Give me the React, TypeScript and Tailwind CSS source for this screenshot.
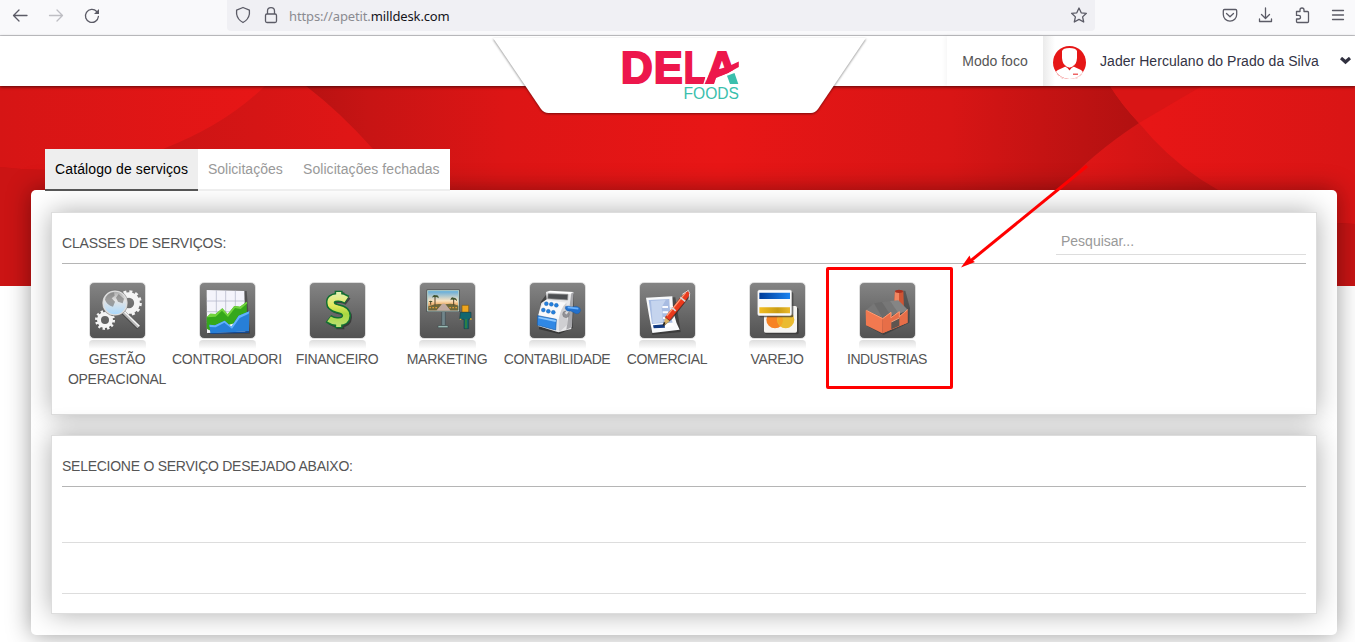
import React from "react";

const Gears = () => (
  <>
    <g fill="none" stroke="#f4f4f4">
      <circle cx="117" cy="60" r="24" strokeWidth="17" />
      <circle cx="117" cy="60" r="34" strokeWidth="9" strokeDasharray="9 8.8" />
      <circle cx="45" cy="111" r="18" strokeWidth="12" />
      <circle cx="45" cy="111" r="26" strokeWidth="8" strokeDasharray="7 6.6" />
    </g>
    <path d="M97 86 146 134" stroke="#444" strokeWidth="13" />
    <path d="M97 84 146 132" stroke="#b9b9b9" strokeWidth="10" />
    <path d="M100 83 148 130" stroke="#f5f5f5" strokeWidth="4" />
    <circle cx="75" cy="60" r="36" fill="url(#lens)" stroke="#dedede" strokeWidth="5" />
    <circle cx="75" cy="60" r="39" fill="none" stroke="#666" strokeWidth="1.5" />
    <path d="M45 50q5-20 27-22l2 10-9 8 10 10-6 15q-18-4-24-21M86 33l16 14-4 14-14-5-6-12z" fill="#777" opacity=".65" />
  </>
);

const Graph = () => (
  <>
    <path d="M24 24H140L150 152H24z" fill="#333" opacity=".55" />
    <path d="M20 21 133 24 136 147 21 150z" fill="#f4f4fb" />
    <path d="M20 54H134M20 86H134M20 118H134M49 22V149M77 22V149M106 23V148" stroke="#aeb0c4" strokeWidth="2" />
    <path d="M20 103 31 92 47 93 67 76 83 94 103 69 120 71 140 56 141 110 28 142 20 137z" fill="#35a81b" />
    <path d="M20 103 31 92 47 93 67 76 83 94 103 69 120 71 140 56 142 61 122 78 105 75 84 102 66 83 47 101z" fill="#72d43e" />
    <path d="M28 125 45 127 74 113 94 131 116 98 148 85 147 145 31 151z" fill="#277fd8" />
    <path d="M28 125 45 127 74 113 94 131 116 98 148 85 146 92 119 105 96 137 73 119 47 133 29 132z" fill="#62b1ff" />
    <path d="M31 151 147 145V149L31 153z" fill="#124b99" />
  </>
);

const Dollar = () => (
  <g fill="none" strokeLinejoin="round">
    <path d="M109 51Q96 41 81 43 60 45 62 60 62 72 83 77 109 82 109 98 108 117 84 116 68 117 56 107M86 23V38M86 118V134" stroke="#222" strokeWidth="24" opacity=".6" transform="translate(5 5)" />
    <path d="M86 23V38M86 118V136" stroke="#126f32" strokeWidth="24" />
    <path d="M111 50Q96 41 81 43 60 45 62 60 62 72 83 77 109 82 109 98 108 117 84 116 68 117 55 107" stroke="#126f32" strokeWidth="28" />
    <path d="M86 27V41M86 116V132" stroke="url(#money)" strokeWidth="15" />
    <path d="M109 50Q96 41 81 43 60 45 62 60 62 72 83 77 109 82 109 98 108 117 84 116 70 117 57 108" stroke="url(#money)" strokeWidth="19" />
  </g>
);

const Billboard = () => (
  <>
    <path d="M65 84H76V128H65z" fill="#71868b" stroke="#3f4c50" strokeWidth="2" />
    <path d="M54 128H84V134H54z" fill="#a5c7c0" stroke="#414f50" strokeWidth="2" />
    <rect x="20" y="20" width="99" height="67" fill="#343434" />
    <rect x="23" y="23" width="93" height="61" fill="url(#beach)" stroke="#b8d8d2" strokeWidth="3" />
    <path d="M25 70Q52 60 66 64L50 82H25zM75 64Q98 59 115 68V82H91z" fill="#6e683b" />
    <path d="M67 62H75L91 82H50z" fill="#c0a9a0" />
    <path d="M45 67V40M101 67V46M32 65V55" stroke="#54442a" strokeWidth="3" />
    <path d="M36 44q3-11 11-7 9-3 9 9-8-6-10-3-6-2-10 1M91 52q2-12 10-8 10 0 10 11-7-8-10-4-6-3-10 1M26 57q6-8 12 0" fill="#40522e" />
    <path d="M28 74h25M88 74h25" stroke="#df9c38" strokeWidth="4" strokeDasharray="5 4" />
    <path d="M126 67H146V88H126z" fill="#efa51e" stroke="#7b5b17" strokeWidth="2" />
    <path d="M121 88H153V108H146V137H132V109H119z" fill="#12676f" stroke="#174248" strokeWidth="2" />
    <path d="M138 109V136" stroke="#32853c" strokeWidth="5" />
    <path d="M119 109h5M150 108h5" stroke="#dfb02a" strokeWidth="4" />
  </>
);

const Register = () => (
  <>
    <path d="M32 57 52 30 132 34 128 135 88 153 27 139z" fill="#222" opacity=".6" />
    <path d="M48 27 126 28 124 138 85 148 24 129 25 95 34 60 50 49z" fill="#e7e7e9" />
    <path d="M48 27 60 23 131 27 126 34z" fill="#fff" />
    <path d="M124 31 131 27 126 132 109 140z" fill="#a7a7ab" />
    <path d="M54 32 114 34 113 51 53 47z" fill="#4d4f52" stroke="#999" strokeWidth="2" />
    <path d="M49 51Q34 62 26 96L86 110Q92 75 109 59z" fill="#f9f9fa" />
    <path d="M86 110Q92 75 109 59L112 125 87 148z" fill="#cfcfd2" />
    <path d="M23 98 79 109 77 141 22 126z" fill="#3088e5" stroke="#195da8" strokeWidth="2" />
    <path d="M26 101 78 111 77 117 25 106z" fill="#8bc7ff" />
    <g fill="#257fdd" stroke="#125aa4">
      <circle cx="49" cy="62" r="6" /><circle cx="64" cy="64" r="6" /><circle cx="79" cy="67" r="6" />
      <circle cx="40" cy="81" r="6" /><circle cx="55" cy="85" r="6" /><circle cx="70" cy="88" r="6" />
    </g>
    <circle cx="108" cy="94" r="10" fill="#919196" stroke="#666" />
    <path d="M107 92 119 77" stroke="#d8d8da" strokeWidth="7" />
    <path d="M106 71Q115 66 123 72L139 70Q152 73 152 82 149 94 138 92L122 84Q111 87 106 78z" fill="#2370cc" stroke="#14559c" />
    <path d="M113 73 145 77" stroke="#68b1ff" strokeWidth="5" />
  </>
);

const Document = () => (
  <>
    <path d="M22 47 106 43 122 147 37 155z" fill="#222" opacity=".5" />
    <path d="M18 44 97 40Q98 105 119 140L37 150Q27 101 18 44z" fill="#f8fafc" />
    <path d="M26 51 88 48Q89 94 98 119L36 123Q31 85 26 51z" fill="#a8bce2" />
    <path d="M33 54 77 51 65 73 69 118 38 121z" fill="#c5d4ee" />
    <path d="M67 72H84M68 88H84M69 105H84" stroke="#f8faff" strokeWidth="6" />
    <path d="M36 123 98 119 102 130 39 138z" fill="#fff" />
    <path d="M39 127 73 124 75 134 41 136z" fill="#123b83" />
    <path d="M72 130 78 101 124 43 140 23 149 27 149 41 97 108 80 122z" fill="#222" opacity=".7" />
    <path d="M70 128 76 102 89 115z" fill="#d9b166" />
    <path d="M76 103 123 42 136 55 89 112z" fill="#eb3a1c" stroke="#8e2518" strokeWidth="2" />
    <path d="M124 42 140 23 149 27 148 38 135 55z" fill="#e83b20" stroke="#711f18" />
    <path d="M80 99 137 29" stroke="#ff9a74" strokeWidth="4" />
    <path d="M91 76Q98 72 107 84M121 43 136 55" fill="none" stroke="#d8d8d8" strokeWidth="5" />
    <path d="M127 34 145 22 149 31 147 51" fill="none" stroke="#dedede" strokeWidth="3" />
    <path d="M70 128 74 118" stroke="#222" strokeWidth="5" />
  </>
);

const Cards = () => (
  <>
    <rect x="45" y="74" width="101" height="80" rx="5" fill="#333" opacity=".7" />
    <rect x="42" y="69" width="99" height="80" rx="5" fill="#f6f5f2" />
    <circle cx="75" cy="110" r="26" fill="#f78324" /><circle cx="107" cy="110" r="26" fill="#eabb31" />
    <path d="M91 90Q107 110 91 131 76 112 91 90" fill="#f5a626" />
    <rect x="28" y="27" width="102" height="76" rx="5" fill="#333" opacity=".7" />
    <rect x="23" y="21" width="102" height="77" rx="5" fill="#fafafa" stroke="#c7c7c7" />
    <path d="M28 29H120V48H28z" fill="url(#cardblue)" /><path d="M28 73H120V91H28z" fill="url(#cardgold)" />
  </>
);

const Factory = () => (
  <>
    <path d="M21 83 104 54 106 24 136 23 150 75 148 119 71 156 22 130z" fill="#242424" opacity=".4" />
    <path d="M105 24 130 23 132 79 101 77z" fill="#cf5534" />
    <path d="M105 24 117 23V75H102z" fill="#f28661" /><ellipse cx="117" cy="25" rx="12" ry="5" fill="#a93020" />
    <path d="M17 82 68 104 67 151 18 127z" fill="#f27950" />
    <path d="M67 105 91 88V108L115 85V105L142 80V119L67 151z" fill="#e56b45" />
    <path d="M18 82 42 61 70 73 68 104z" fill="#777" />
    <path d="M42 61 66 57 93 88 68 106z" fill="#6b6b6b" />
    <path d="M66 57 90 54 118 87 93 99z" fill="#777" />
    <path d="M90 54 115 52 144 81 117 93z" fill="#858585" />
    <path d="M68 107 93 88V104L118 86V101L143 80V119L68 151z" fill="#e76e48" />
    <path d="M19 82 68 107 93 88V104L118 86V101L143 80" fill="none" stroke="#ff9b72" strokeWidth="3" />
    <path d="M94 117 118 105V128L94 139z" fill="#5e5550" />
    <path d="M94 117 118 105" stroke="#efa07d" strokeWidth="3" />
  </>
);

const services = [
  { label: "GESTÃO OPERACIONAL", icon: <Gears />, cls: "text-center tracking-[-0.27px]" },
  { label: "CONTROLADORI", icon: <Graph />, cls: "text-left whitespace-nowrap tracking-[-0.25px]" },
  { label: "FINANCEIRO", icon: <Dollar />, cls: "text-center tracking-[-0.4px]" },
  { label: "MARKETING", icon: <Billboard />, cls: "text-center tracking-[-0.3px]" },
  { label: "CONTABILIDADE", icon: <Register />, cls: "text-center tracking-[-0.4px]" },
  { label: "COMERCIAL", icon: <Document />, cls: "text-center tracking-[-0.3px]" },
  { label: "VAREJO", icon: <Cards />, cls: "text-center tracking-[-0.3px]" },
  { label: "INDUSTRIAS", icon: <Factory />, cls: "text-center tracking-[-0.5px]" },
];

const Defs = () => (
  <svg className="absolute h-0 w-0" aria-hidden="true">
    <defs>
      <linearGradient id="lens" x2="0" y2="1"><stop stopColor="#a7a7a7" /><stop offset=".4" stopColor="#e4e4e4" /><stop offset="1" stopColor="#a8d9ff" /></linearGradient>
      <linearGradient id="money" gradientUnits="userSpaceOnUse" x1="80" y1="25" x2="80" y2="138"><stop stopColor="#e4f2b8" /><stop offset=".38" stopColor="#e2e85c" /><stop offset=".6" stopColor="#a8d840" /><stop offset="1" stopColor="#bfe27e" /></linearGradient>
      <linearGradient id="beach" x2="0" y2="1"><stop stopColor="#5ba9dc" /><stop offset=".5" stopColor="#fbe3c0" /><stop offset=".65" stopColor="#f0b777" /><stop offset="1" stopColor="#8d604a" /></linearGradient>
      <linearGradient id="cardblue"><stop stopColor="#003d9a" /><stop offset="1" stopColor="#1b83ef" /></linearGradient>
      <linearGradient id="cardgold"><stop stopColor="#f2bd20" /><stop offset=".6" stopColor="#c99c12" /><stop offset="1" stopColor="#eab92c" /></linearGradient>
    </defs>
  </svg>
);

function BrowserBar() {
  return (
    <div className="flex h-9 shrink-0 border-b border-[#ccccd0] bg-[#f9f9fb]">
      <div className="flex w-[227px] shrink-0 text-[#5b5b66]">
        <svg className="h-8 w-[110px]" fill="none" stroke="currentColor" strokeWidth="1.3" strokeLinecap="round" strokeLinejoin="round">
          <path d="M13.5 15.5H27M19 10 13.5 15.5 19 21" />
          <path d="M49.500 15.500H62.500M57 10 62.500 15.500 57 21" stroke="#bebec3" />
          <path d="M96.700 11.500A6.500 6.500 0 1 0 98.400 16.500" />
          <path d="M99 9V14H94z" fill="currentColor" stroke="none" />
        </svg>
      </div>
      <div className="flex h-[31px] w-[868px] shrink-0 rounded-b bg-[#f0f0f4]">
        <svg className="h-[31px] w-[62px] shrink-0" fill="none" stroke="#5b5b66" strokeWidth="1.3" strokeLinejoin="round">
          <path d="M16 7.500 22.400 10.200V14Q21.500 19.600 16 22.500 10.500 19.600 9.600 14V10.200z" />
          <rect x="38.500" y="14" width="11" height="8.500" rx="1.500" /><path d="M40.500 14V11Q40.500 7.700 44 7.700T47.500 11V14" />
        </svg>
        <div className="flex-1 pt-[6px] font-['Noto_Sans',sans-serif] text-[13px] leading-5 tracking-[-0.13px] whitespace-nowrap text-[#8b8b91]">https://apetit.<span className="text-[#15141a]">milldesk.com</span></div>
        <svg className="h-[31px] w-8 shrink-0" fill="none" stroke="#5b5b66" strokeWidth="1.3" strokeLinejoin="round"><path d="M16 8 18.200 12.800 23.400 13.300 19.600 16.900 20.700 22 16 19.400 11.300 22 12.400 16.900 8.600 13.300 13.800 12.800z" /></svg>
      </div>
      <svg className="h-[31px] flex-1" fill="none" stroke="#5b5b66" strokeWidth="1.3" strokeLinecap="round" strokeLinejoin="round">
        <path d="M129.500 9.500H140.500Q141.700 9.500 141.700 10.700V14.500A6.700 6.700 0 0 1 128.300 14.500V10.700Q128.300 9.500 129.500 9.500zM131.500 13.500 135 16.700 138.500 13.500" />
        <path d="M170.500 8V18M166.500 14.500 170.500 18.500 174.500 14.500M164.500 19V21.500H176.500V19" />
        <path d="M201.500 11.500H205V10Q205 8 207 8T209 10V11.500H212.500Q213.500 11.500 213.500 12.500V21.500Q213.500 22.500 212.500 22.500H202.500Q201.500 22.500 201.500 21.500V19H203.500Q205.500 19 205.500 17.200T203.500 15.400H201.500z" />
        <path d="M237.500 10.500H248.500M237.500 15H248.500M237.500 19.500H248.500" />
      </svg>
    </div>
  );
}

function Logo() {
  return (
    <svg className="absolute top-0 left-[480px] h-[90px] w-[400px] overflow-visible" viewBox="480 36 400 90">
      <path className="drop-shadow-[0_1px_1px_rgba(0,0,0,0.45)]" d="M493 38H866L818 109Q815 113 811 113H548.500Q544 113 541 109z" fill="#fff" />
      <g fontFamily="Liberation Sans, sans-serif" fontWeight="700" fontSize="44.500" fill="#ed174c" stroke="#ed174c" strokeWidth="2">
        <text x="620.800" y="83" textLength="32" lengthAdjust="spacingAndGlyphs">D</text>
        <text x="653.800" y="83" textLength="29" lengthAdjust="spacingAndGlyphs">E</text>
        <text x="683.800" y="83" textLength="22" lengthAdjust="spacingAndGlyphs">L</text>
        <text x="706" y="83" textLength="32" lengthAdjust="spacingAndGlyphs">A</text>
      </g>
      <path d="M703.700 85 713 55" stroke="#fff" strokeWidth="1.200" />
      <path d="M713 86 716 77.500 728 73 740 66V87H713z" fill="#fff" />
      <path d="M710 72 718 69.500 728 66.500 738.800 61.500V67L728 73 716 78 714 84H704.800z" fill="#ed174c" />
      <path d="M727 75.800 734.500 73 738.300 84H730z" fill="#3bbfad" />
      <text x="683.500" y="99.300" fontFamily="Liberation Sans, sans-serif" fontSize="16" textLength="55.500" lengthAdjust="spacingAndGlyphs" fill="#3bbfad">FOODS</text>
    </svg>
  );
}

function Header() {
  return (
    <header className="relative z-10 flex h-[50px] shrink-0 justify-end bg-white shadow-[0_1px_3px_rgba(0,0,0,0.6)]">
      <Logo />
      <div className="flex w-24 items-center justify-center text-[#555] shadow-[-2px_0_4px_rgba(0,0,0,0.04)]">Modo foco</div>
      <div className="flex w-[312px] items-center bg-[linear-gradient(90deg,#ebebeb,#fff_12px)] text-[#333344]">
        <svg className="mt-[3px] ml-[10px] h-[33px] w-[33px]" viewBox="0 0 33 33">
          <circle cx="16.500" cy="16.500" r="16.500" fill="#e61616" />
          <path d="M12.500 20.500 20.500 20.500 28 24Q30.500 25.500 29.500 27 24 33 16.500 33 8 32.500 3 26 3 25 5 24z" fill="#fff" />
          <path d="M9 5Q10 2 16.500 2T24 5V12Q23.500 18.500 20 20.500 17 22.500 13 20.500 9.500 18 9 12z" fill="#fff" />
          <path d="M11 18.500Q13 22 16.500 22T22 18.500" fill="none" stroke="#e61616" strokeWidth=".9" />
          <path d="M14.500 22 18.500 22 16.500 24.500z" fill="#e61616" /><path d="M20 27.500H25V29H20z" fill="#ee6464" />
          <path d="M4 28A16 16 0 0 0 29 28" fill="none" stroke="#f5baba" strokeWidth=".8" strokeDasharray="3 2" />
        </svg>
        <span className="ml-[14px] whitespace-nowrap tracking-[0.05px]">Jader Herculano do Prado da Silva</span>
        <svg className="mr-1 ml-auto h-2 w-[11px]" viewBox="0 0 11 8"><path d="M1 1 5.500 5 10 1" fill="none" stroke="#30303f" strokeWidth="3.200" /></svg>
      </div>
    </header>
  );
}

function Banner() {
  return (
    <svg className="absolute top-0 left-0 h-[200px] w-full" viewBox="0 86 1355 200" preserveAspectRatio="none">
      <defs>
        <linearGradient id="base" gradientUnits="userSpaceOnUse" x1="310" y1="120" x2="1130" y2="150"><stop stopColor="#b91212" /><stop offset=".07" stopColor="#c71414" /><stop offset=".24" stopColor="#dd1515" /><stop offset=".5" stopColor="#e81616" /><stop offset=".78" stopColor="#d81515" /><stop offset="1" stopColor="#b31111" /></linearGradient>
        <linearGradient id="leftfan" gradientUnits="userSpaceOnUse" x1="160" y1="150" x2="350" y2="150"><stop stopColor="#cb1414" /><stop offset="1" stopColor="#df1616" /></linearGradient>
        <linearGradient id="lefttop" gradientUnits="userSpaceOnUse" x1="0" y1="0" x2="265" y2="0"><stop stopColor="#d61515" /><stop offset="1" stopColor="#e71616" /></linearGradient>
        <linearGradient id="rightfan" gradientUnits="userSpaceOnUse" x1="1150" y1="0" x2="1355" y2="0"><stop stopColor="#e71616" /><stop offset="1" stopColor="#d91515" /></linearGradient>
        <linearGradient id="rightlow" gradientUnits="userSpaceOnUse" x1="1080" y1="0" x2="1230" y2="0"><stop stopColor="#df1616" /><stop offset="1" stopColor="#c41313" /></linearGradient>
      </defs>
      <path d="M0 86H1355V286H0z" fill="url(#base)" />
      <path d="M0 86H306Q340 112 373 149 410 190 430 286H0z" fill="url(#leftfan)" />
      <path d="M0 86H265Q225 125 163 149 90 178 0 167z" fill="url(#lefttop)" />
      <path d="M0 167Q90 178 163 149V286H0z" fill="#cb1414" />
      <path d="M1139 123Q1090 155 1060 190L1040 220H1355V100H1139z" fill="url(#rightlow)" />
      <path d="M1110 86H1355V224Q1220 222 1139 123 1122 105 1110 86z" fill="url(#rightfan)" />
      <path d="M1110 86H1202L1139 123Q1122 105 1110 86z" fill="#d91515" />
      <path d="M1300 217Q1330 224 1355 224V286H1300z" fill="#c81414" />
    </svg>
  );
}

export default function App() {
  return (
    <div className="flex h-[642px] w-full flex-col overflow-hidden bg-white font-['Liberation_Sans',Arial,sans-serif] text-sm">
      <Defs />
      <BrowserBar />
      <Header />
      <main className="relative flex-1 px-[31px] pt-[63px]">
        <Banner />
        <nav className="relative z-10 ml-[14px] flex h-[42px] w-[405px] bg-white text-[#999]">
          <div className="w-[153px] border-b-2 border-[#555] bg-[#eee] pt-[10px] pl-[10px] whitespace-nowrap tracking-[0.12px] text-black">Catálogo de serviços</div>
          <div className="w-[95px] border-b-2 border-[#eee] pt-[10px] pl-[10px] whitespace-nowrap">Solicitações</div>
          <div className="flex-1 border-b-2 border-[#eee] pt-[10px] pl-[10px] tracking-[0.06px] whitespace-nowrap">Solicitações fechadas</div>
        </nav>
        <div className="relative -mt-px flex h-[445px] w-[1306px] flex-col gap-5 overflow-hidden rounded-[5px] bg-white px-5 pt-[22px] [box-shadow:0_0_25px_rgba(0,0,0,0.4)]">
          <section className="relative h-[203px] w-[1266px] shrink-0 border border-[#ddd] bg-white px-[10px] text-[#555] shadow-[0_0_25px_rgba(0,0,0,0.32)]">
            <div className="flex h-[51px] justify-between border-b border-[#b5b5b5]">
              <h2 className="pt-[20px] tracking-[-0.18px]">CLASSES DE SERVIÇOS:</h2>
              <div className="mt-[18px] h-6 w-[250px] border-b border-[#ddd] pl-[5px] text-[#999]">Pesquisar...</div>
            </div>
            <div className="flex pt-[18px]">
              {services.map((s) => (
                <div key={s.label} className="w-[110px]">
                  <div className="mx-auto w-[57px]">
                    <svg className="block h-[57px] w-[57px] rounded-[5px] border border-[#ddd] bg-[linear-gradient(#848484,#525252)]" viewBox="0 0 165 165">{s.icon}</svg>
                    <div className="mt-px h-[9px] rounded-t-[4px] bg-[linear-gradient(#dedede,#fff)]" />
                  </div>
                  <div className={"leading-5 " + s.cls}>{s.label}</div>
                </div>
              ))}
            </div>
            <div className="absolute top-[54px] left-[774px] h-[122px] w-[127px] rounded-[2px] border-3 border-[#ff0000]" />
          </section>
          <section className="relative h-[179px] w-[1266px] shrink-0 border border-[#ddd] bg-white px-[10px] text-[#555] shadow-[0_0_25px_rgba(0,0,0,0.32)]">
            <h2 className="h-[51px] border-b border-[#b5b5b5] pt-[20px] tracking-[-0.26px]">SELECIONE O SERVIÇO DESEJADO ABAIXO:</h2>
            <div className="h-14 border-b border-[#ddd]" />
            <div className="h-[51px] border-b border-[#ddd]" />
          </section>
        </div>
        <svg className="absolute top-[74px] left-[950px] h-[120px] w-[150px]" viewBox="950 160 150 120">
          <path d="M1087 166 968 263" stroke="#f00" strokeWidth="3" /><path d="M961 267.500 969.500 255.500 971 259.500 975 262z" fill="#f00" />
        </svg>
      </main>
    </div>
  );
}
